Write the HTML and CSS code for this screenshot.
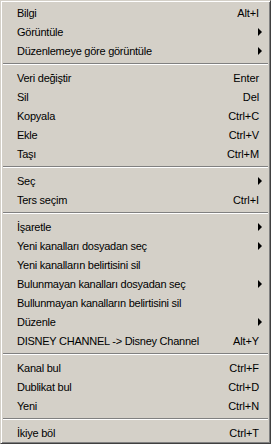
FILE: index.html
```html
<!DOCTYPE html>
<html lang="tr">
<head>
  <meta charset="UTF-8" />
  <meta name="viewport" content="width=device-width, initial-scale=1" />
  <title>Menü</title>
  <link rel="stylesheet" href="styles.css">
</head>
<body>

  <div class="menu">
    <div class="item"><span class="label">Bilgi</span><span class="key">Alt+I</span></div>
    <div class="item"><span class="label">Görüntüle</span><span class="sub"></span></div>
    <div class="item"><span class="label">Düzenlemeye göre görüntüle</span><span class="sub"></span></div>

    <div class="sep"></div>

    <div class="item"><span class="label">Veri değiştir</span><span class="key">Enter</span></div>
    <div class="item"><span class="label">Sil</span><span class="key">Del</span></div>
    <div class="item"><span class="label">Kopyala</span><span class="key">Ctrl+C</span></div>
    <div class="item"><span class="label">Ekle</span><span class="key">Ctrl+V</span></div>
    <div class="item"><span class="label">Taşı</span><span class="key">Ctrl+M</span></div>

    <div class="sep"></div>

    <div class="item"><span class="label">Seç</span><span class="sub"></span></div>
    <div class="item"><span class="label">Ters seçim</span><span class="key">Ctrl+I</span></div>

    <div class="sep"></div>

    <div class="item"><span class="label">İşaretle</span><span class="sub"></span></div>
    <div class="item"><span class="label">Yeni kanalları dosyadan seç</span><span class="sub"></span></div>
    <div class="item"><span class="label">Yeni kanalların belirtisini sil</span></div>
    <div class="item"><span class="label">Bulunmayan kanalları dosyadan seç</span><span class="sub"></span></div>
    <div class="item"><span class="label">Bullunmayan kanalların belirtisini sil</span></div>
    <div class="item"><span class="label">Düzenle</span><span class="sub"></span></div>
    <div class="item"><span class="label">DISNEY CHANNEL -&gt; Disney Channel</span><span class="key">Alt+Y</span></div>

    <div class="sep"></div>

    <div class="item"><span class="label">Kanal bul</span><span class="key">Ctrl+F</span></div>
    <div class="item"><span class="label">Dublikat bul</span><span class="key">Ctrl+D</span></div>
    <div class="item"><span class="label">Yeni</span><span class="key">Ctrl+N</span></div>

    <div class="sep"></div>

    <div class="item"><span class="label">İkiye böl</span><span class="key">Ctrl+T</span></div>
  </div>

</body>
</html>
```

FILE: styles.css
```css
body {
  margin: 0;
  background-color: #d4d0c8;
  font-family: "Liberation Sans", Arial, sans-serif;
  font-size: 11px;
  color: #000;
}
.menu {
  box-sizing: border-box;
  width: 271px;
  height: 444px;
  padding: 2px 1px 1px 1px;
  background-color: #d4d0c8;
  border: 1px solid;
  border-color: #d4d0c8 #404040 #404040 #d4d0c8;
  box-shadow: inset 1px 1px #fff, inset -1px -1px #808080;
}
.item {
  display: flex;
  align-items: center;
  height: 19px;
  padding: 0 10px 0 15px;
  white-space: nowrap;
}
.item .label {
  flex: 1;
  letter-spacing: -0.25px;
}
.item .key {
  text-align: right;
  letter-spacing: -0.1px;
}
.item .sub {
  width: 0;
  height: 0;
  margin-right: -3px;
  border-top: 4px solid transparent;
  border-bottom: 4px solid transparent;
  border-left: 4px solid #000;
}
.sep {
  height: 8px;
  margin: 0 1px;
  display: flex;
  flex-direction: column;
  justify-content: center;
}
.sep::before {
  content: "";
  display: block;
  border-top: 1px solid #808080;
  border-bottom: 1px solid #fff;
}
```
